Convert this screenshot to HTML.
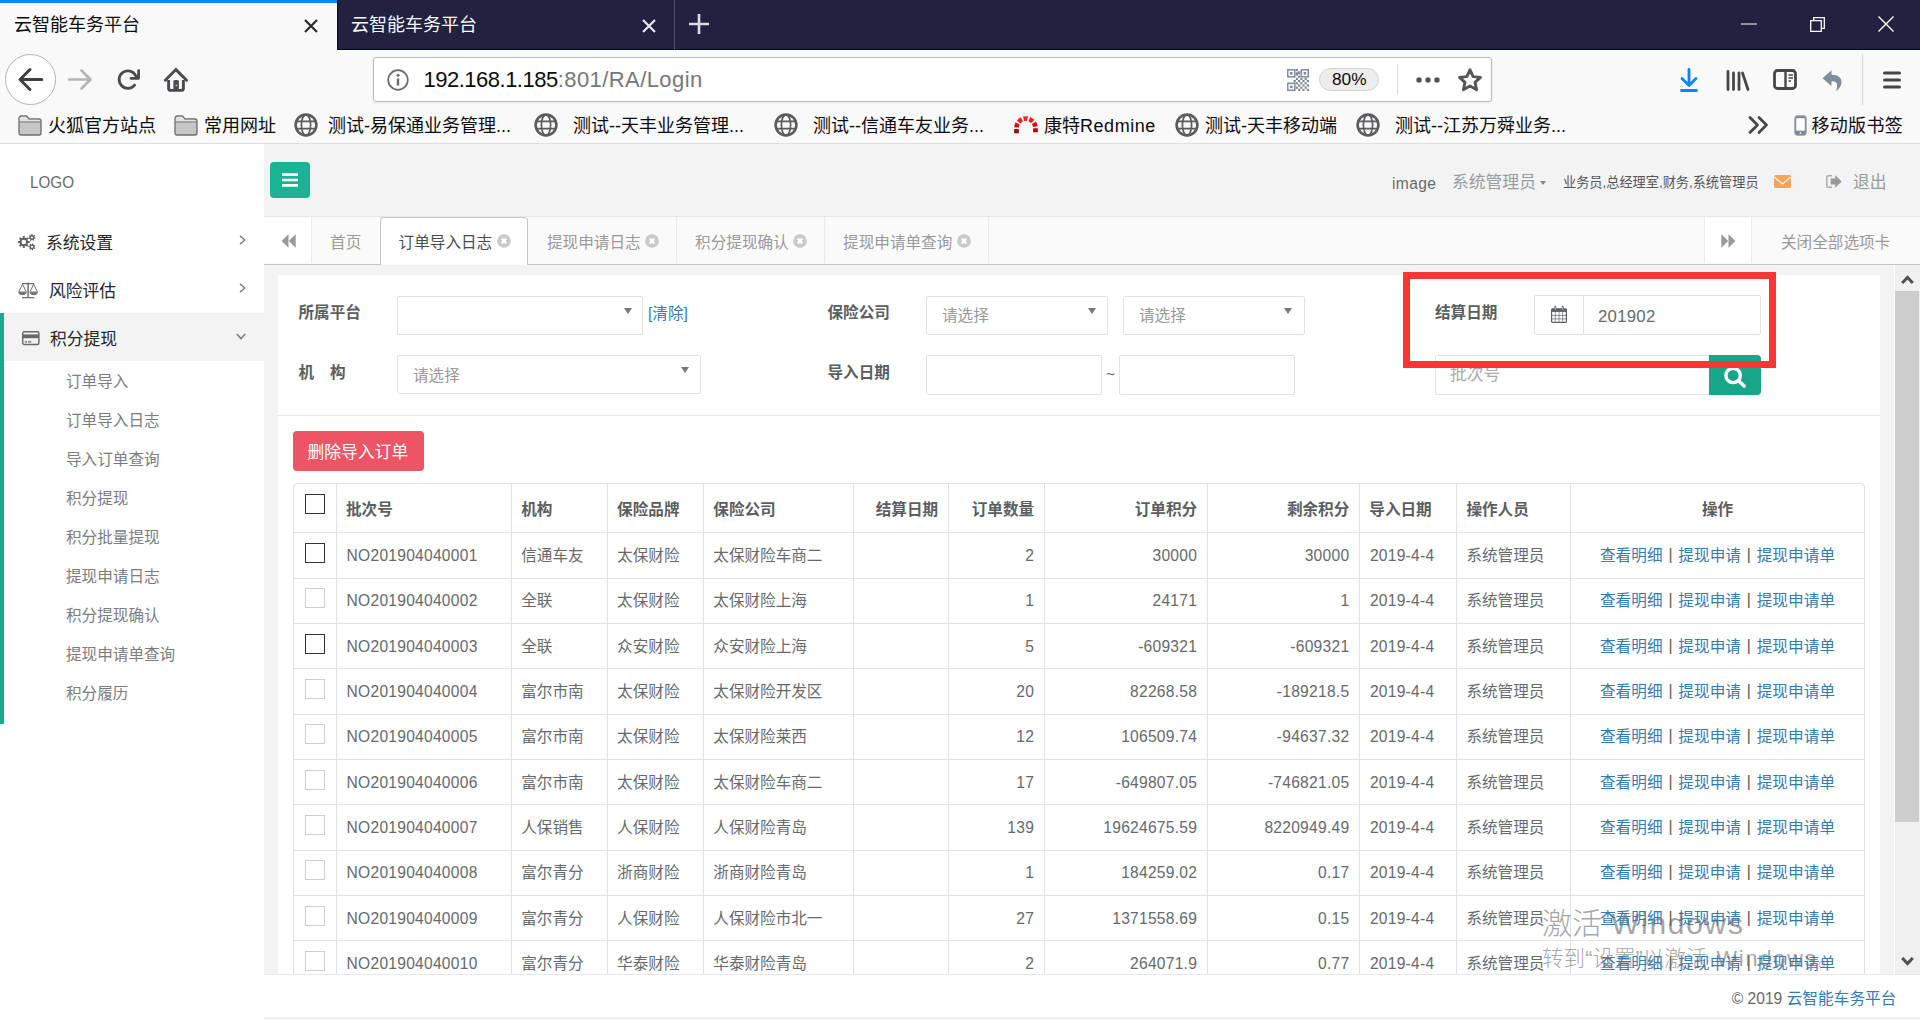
<!DOCTYPE html>
<html lang="zh-CN"><head><meta charset="utf-8"><title>云智能车务平台</title>
<style>
*{box-sizing:border-box;margin:0;padding:0}
html,body{width:1920px;height:1020px;overflow:hidden;background:#fff}
body{font-family:"Liberation Sans","Noto Sans CJK SC",sans-serif;color:#676a6c;font-size:15.6px;position:relative}
.abs{position:absolute}
.t{position:absolute;white-space:nowrap;line-height:1}
svg{position:absolute;overflow:visible}
/* ---------- browser chrome ---------- */
#tabbar{left:0;top:0;width:1920px;height:50px;background:#20223f}
#tab1{left:0;top:0;width:337px;height:50px;background:#f9f9fa}
#tab1line{left:0;top:0;width:337px;height:3px;background:#0a84ff}
#toolbar{left:0;top:50px;width:1920px;height:93px;background:#f9f9fa}
#chromeline{left:0;top:143px;width:1920px;height:1px;background:#e0e0e1}
.ct{font-size:18px;color:#0c0c0d}
#urlbar{left:373px;top:57px;width:1119px;height:45px;background:#fff;border:1px solid #b9b9bb;border-radius:3px;box-shadow:0 1px 3px rgba(0,0,0,.08)}
.bm{font-size:18px;color:#0c0c0d;top:116.8px}
/* ---------- page ---------- */
#side{left:0;top:144px;width:264px;height:876px;background:#fff}
#main{left:264px;top:144px;width:1656px;height:876px;background:#f3f3f4}
.nav1{font-size:16.8px;color:#262626}
.sub{font-size:15.6px;color:#7b7d7f;left:66px}
.lbl{font-weight:bold;font-size:15.6px;color:#5b5e60}
.box{position:absolute;background:#fff;border:1px solid #e1e2e3;border-radius:2px}
.ph{font-size:15.6px;color:#999}
.tri{position:absolute;width:0;height:0;border-left:4.3px solid transparent;border-right:4.3px solid transparent;border-top:6.8px solid #777}
.ptab{position:absolute;top:217px;height:47px;border-right:1px solid #ebebeb;font-size:15.6px;color:#999;white-space:nowrap}
.vl{position:absolute;width:1px;background:#e3e3e3}
.hl{position:absolute;height:1px;background:#e3e3e3}
.cell{position:absolute;white-space:nowrap;line-height:1;font-size:15.6px;color:#676a6c}
.th{font-weight:bold;color:#5b5e60}
.n{letter-spacing:.25px}
.lk{color:#337ab7;letter-spacing:.1px}
.cb{position:absolute;width:20px;height:20px;left:305px;background:#fff;border:1.5px solid #333}
.cb.l{border:1px solid #cfcfcf}
</style></head>
<body>
<div class="abs" id="tabbar"></div>
<div class="abs" style="left:337px;top:49px;width:1583px;height:1px;background:#07071c"></div><div class="abs" style="left:337px;top:3px;width:1px;height:47px;background:#0c0d22"></div>
<div class="abs" id="tab1"></div><div class="abs" id="tab1line"></div>
<div class="t ct" style="left:14px;top:16px">云智能车务平台</div>
<svg style="left:304px;top:19px" width="14" height="14" viewBox="0 0 14 14"><path d="M1 1L13 13M13 1L1 13" stroke="#2a2a2e" stroke-width="2.2" fill="none"/></svg>
<div class="t ct" style="left:351px;top:16px;color:#f9f9fa">云智能车务平台</div>
<svg style="left:642px;top:19px" width="14" height="14" viewBox="0 0 14 14"><path d="M1 1L13 13M13 1L1 13" stroke="#e8e8ee" stroke-width="2.2" fill="none"/></svg>
<div class="abs" style="left:674px;top:0;width:1px;height:50px;background:#4a4c63"></div>
<svg style="left:689px;top:14px" width="20" height="20" viewBox="0 0 20 20"><path d="M10 0V20M0 10H20" stroke="#dcdce2" stroke-width="2.6" fill="none"/></svg>
<svg style="left:1741px;top:23px" width="16" height="2" viewBox="0 0 16 2"><path d="M0 1H16" stroke="#fff" stroke-width="1"/></svg>
<svg style="left:1810px;top:17px" width="15" height="15" viewBox="0 0 15 15"><path d="M0.7 3.7H11.3V14.3H0.7Z M3.7 3.7V0.7H14.3V11.3H11.3" stroke="#fff" stroke-width="1.3" fill="none"/></svg>
<svg style="left:1878px;top:16px" width="16" height="16" viewBox="0 0 16 16"><path d="M0.5 0.5L15.5 15.5M15.5 0.5L0.5 15.5" stroke="#fff" stroke-width="1.4" fill="none"/></svg>
<div class="abs" id="toolbar"></div><div class="abs" id="chromeline"></div>
<div class="abs" style="left:337px;top:50px;width:1583px;height:1px;background:#fff"></div>
<div class="abs" style="left:5px;top:54px;width:51px;height:51px;border-radius:50%;background:#fff;border:1px solid #b4b4b6"></div>
<svg style="left:18px;top:68px" width="26" height="23" viewBox="0 0 26 23"><path d="M23.8 11.5H3M12 1.5L2 11.5L12 21.5" stroke="#3f3f41" stroke-width="3" fill="none" stroke-linecap="round" stroke-linejoin="round"/></svg>
<svg style="left:68px;top:69px" width="24" height="21" viewBox="0 0 24 21"><path d="M1 10.5H22M13.5 1.5L22.5 10.5L13.5 19.5" stroke="#b5b5b6" stroke-width="2.6" fill="none" stroke-linecap="round" stroke-linejoin="round"/></svg>
<svg style="left:0;top:0" width="240" height="110" viewBox="0 0 240 110"><path d="M135.6 75.6A8.7 8.7 0 1 0 134.6 85.1" stroke="#4a4a4f" stroke-width="2.8" fill="none" stroke-linecap="round"/><path d="M138.6 70.6V78.3H130.9" fill="none" stroke="#4a4a4f" stroke-width="2.7" stroke-linejoin="round" stroke-linecap="round"/><path d="M138.6 73.5V78.3H133.5Z" fill="#4a4a4f"/><path d="M165.3 80.3L175.9 69.6L186.6 80.3" stroke="#4a4a4f" stroke-width="2.9" fill="none" stroke-linecap="round" stroke-linejoin="miter"/><path d="M168.6 80V88.2Q168.6 90.4 170.8 90.4H181.2Q183.4 90.4 183.4 88.2V80" stroke="#4a4a4f" stroke-width="2.9" fill="none"/><path d="M173.4 91V81.6Q173.4 80 175 80H177.300Q178.9 80 178.9 81.6V91Z" fill="#4a4a4f"/><circle cx="176.4" cy="85.3" r="0.9" fill="#c9c9cc"/></svg>
<div class="abs" id="urlbar"></div>
<svg style="left:387px;top:69px" width="22" height="22" viewBox="0 0 22 22"><circle cx="11" cy="11" r="9.8" stroke="#6a6a6c" stroke-width="1.7" fill="none"/><rect x="9.8" y="9.5" width="2.4" height="7" fill="#6a6a6c"/><circle cx="11" cy="6.3" r="1.5" fill="#6a6a6c"/></svg>
<div class="t" id="url" style="left:423.5px;top:69.3px;font-size:22px;color:#0c0c0d;letter-spacing:-0.5px">192.168.1.185<span style="color:#77777a;letter-spacing:.42px">:801/RA/Login</span></div>
<svg style="left:1287px;top:69px" width="22" height="22" viewBox="0 0 22 22" fill="#7f8b99"><rect x="0.8" y="0.8" width="7" height="7" fill="none" stroke="#7f8b99" stroke-width="1.5"/><rect x="3.0" y="3.0" width="2.6" height="2.6"/><rect x="14.3" y="0.8" width="7" height="7" fill="none" stroke="#7f8b99" stroke-width="1.5"/><rect x="16.6" y="3.0" width="2.6" height="2.6"/><rect x="0.8" y="14.3" width="7" height="7" fill="none" stroke="#7f8b99" stroke-width="1.5"/><rect x="3.0" y="16.6" width="2.6" height="2.6"/><rect x="9" y="3.3" width="4" height="2"/><rect x="8.8" y="0.0" width="2.2" height="2.2"/><rect x="11.0" y="2.2" width="2.2" height="2.2"/><rect x="8.8" y="4.4" width="2.2" height="2.2"/><rect x="11.0" y="6.6" width="2.2" height="2.2"/><rect x="8.8" y="8.8" width="2.2" height="2.2"/><rect x="13.2" y="8.8" width="2.2" height="2.2"/><rect x="17.6" y="8.8" width="2.2" height="2.2"/><rect x="6.6" y="11.0" width="2.2" height="2.2"/><rect x="11.0" y="11.0" width="2.2" height="2.2"/><rect x="15.4" y="11.0" width="2.2" height="2.2"/><rect x="19.8" y="11.0" width="2.2" height="2.2"/><rect x="8.8" y="13.2" width="2.2" height="2.2"/><rect x="13.2" y="13.2" width="2.2" height="2.2"/><rect x="17.6" y="13.2" width="2.2" height="2.2"/><rect x="11.0" y="15.4" width="2.2" height="2.2"/><rect x="15.4" y="15.4" width="2.2" height="2.2"/><rect x="19.8" y="15.4" width="2.2" height="2.2"/><rect x="8.8" y="17.6" width="2.2" height="2.2"/><rect x="13.2" y="17.6" width="2.2" height="2.2"/><rect x="17.6" y="17.6" width="2.2" height="2.2"/><rect x="11.0" y="19.8" width="2.2" height="2.2"/><rect x="15.4" y="19.8" width="2.2" height="2.2"/><rect x="19.8" y="19.8" width="2.2" height="2.2"/></svg>
<div class="abs" style="left:1319px;top:68px;width:60px;height:23px;border-radius:12px;background:#ededf0;border:1px solid #d2d2d5"></div>
<div class="t" style="left:1332px;top:71px;font-size:17.3px;color:#0c0c0d">80%</div>
<div class="abs" style="left:1397px;top:64px;width:1px;height:31px;background:#dedee0"></div>
<svg style="left:1416px;top:77px" width="24" height="6" viewBox="0 0 24 6" fill="#555558"><circle cx="3" cy="3" r="2.7"/><circle cx="12" cy="3" r="2.7"/><circle cx="21" cy="3" r="2.7"/></svg>
<svg style="left:1458px;top:68px" width="24" height="24" viewBox="0 0 24 24"><path d="M12 1.8L15.1 8.6L22.5 9.4L17 14.4L18.6 21.7L12 18L5.4 21.7L7 14.4L1.5 9.4L8.9 8.6Z" stroke="#555558" stroke-width="2.9" fill="none" stroke-linejoin="round"/></svg>
<svg style="left:1680px;top:68px" width="18" height="24" viewBox="0 0 18 24"><path d="M9 1.5V17M2 10.5L9 17.5L16 10.5M1.5 22.5H16.5" stroke="#0a84ff" stroke-width="2.8" fill="none" stroke-linecap="round" stroke-linejoin="round"/></svg>
<svg style="left:1726px;top:70px" width="24" height="21" viewBox="0 0 24 21"><path d="M2 1.5V19.5M7.5 3V19.5M13 3V19.5M16.5 3L22 19.5" stroke="#47474a" stroke-width="2.8" fill="none" stroke-linecap="round"/></svg>
<svg style="left:1773px;top:69px" width="24" height="21" viewBox="0 0 24 21"><rect x="1.5" y="1.5" width="21" height="18" rx="3" stroke="#47474a" stroke-width="2.8" fill="none"/><path d="M12.5 2V19" stroke="#47474a" stroke-width="2.4"/><path d="M15.5 6H20M15.5 9H20M15.5 12H18" stroke="#47474a" stroke-width="1.4"/></svg>
<svg style="left:1822px;top:70px" width="22" height="22" viewBox="0 0 22 22"><path d="M9.500 0.300L0.500 8.200L9.500 16.100V11.300C14.600 11.300 16.400 13.400 14.200 21.200C21.400 16.400 22.600 4.800 9.500 4.800Z" fill="#7e8da0"/></svg>
<div class="abs" style="left:1862px;top:54px;width:1px;height:51px;background:#d7d7db"></div>
<svg style="left:1883px;top:71px" width="18" height="18" viewBox="0 0 18 18"><path d="M1.5 2H16.5M1.5 9H16.5M1.5 16H16.5" stroke="#47474a" stroke-width="3" stroke-linecap="round"/></svg>
<svg style="left:18px;top:115px" width="24" height="21" viewBox="0 0 24 21"><path d="M1 3.5Q1 1 3.5 1H8.5L11 4H21Q23 4 23 6V18Q23 20 21 20H3Q1 20 1 18Z" fill="#c6c6c8" stroke="#6c6c6e" stroke-width="1.3"/><path d="M1.8 6.600V3.500Q1.8 1.8 3.500 1.8H8.200L10.600 4.800H21Q22.200 4.800 22.200 6.600Z" fill="#e2e2e3"/><path d="M1 7H23" stroke="#7d7d7f" stroke-width="1"/></svg>
<div class="t bm" style="left:48px">火狐官方站点</div>
<svg style="left:174px;top:115px" width="24" height="21" viewBox="0 0 24 21"><path d="M1 3.5Q1 1 3.5 1H8.5L11 4H21Q23 4 23 6V18Q23 20 21 20H3Q1 20 1 18Z" fill="#c6c6c8" stroke="#6c6c6e" stroke-width="1.3"/><path d="M1.8 6.600V3.500Q1.8 1.8 3.500 1.8H8.200L10.600 4.800H21Q22.200 4.800 22.200 6.600Z" fill="#e2e2e3"/><path d="M1 7H23" stroke="#7d7d7f" stroke-width="1"/></svg>
<div class="t bm" style="left:204px">常用网址</div>
<svg style="left:294.0px;top:113px" width="24" height="24" viewBox="0 0 24 24" fill="none" stroke="#5c5c5f"><circle cx="12" cy="12" r="10.4" stroke-width="2.6"/><ellipse cx="12" cy="12" rx="4.6" ry="10.4" stroke-width="1.7"/><path d="M2.5 8.3H21.5M2.5 15.7H21.5" stroke-width="1.7"/></svg>
<div class="t bm" style="left:328px">测试-易保通业务管理...</div>
<svg style="left:534.0px;top:113px" width="24" height="24" viewBox="0 0 24 24" fill="none" stroke="#5c5c5f"><circle cx="12" cy="12" r="10.4" stroke-width="2.6"/><ellipse cx="12" cy="12" rx="4.6" ry="10.4" stroke-width="1.7"/><path d="M2.5 8.3H21.5M2.5 15.7H21.5" stroke-width="1.7"/></svg>
<div class="t bm" style="left:573px">测试--天丰业务管理...</div>
<svg style="left:774.0px;top:113px" width="24" height="24" viewBox="0 0 24 24" fill="none" stroke="#5c5c5f"><circle cx="12" cy="12" r="10.4" stroke-width="2.6"/><ellipse cx="12" cy="12" rx="4.6" ry="10.4" stroke-width="1.7"/><path d="M2.5 8.3H21.5M2.5 15.7H21.5" stroke-width="1.7"/></svg>
<div class="t bm" style="left:813px">测试--信通车友业务...</div>
<svg style="left:1014px;top:115.500px" width="24" height="17.500" viewBox="0 0 24 17.5" fill="none"><defs><linearGradient id="rg" x1="0" y1="0" x2="0" y2="1"><stop offset="0" stop-color="#ec2530"/><stop offset="0.45" stop-color="#e00606"/><stop offset="1" stop-color="#9a0000"/></linearGradient></defs><path d="M2.500 17.200V12A9.500 9.500 0 0 1 21.500 12V17.200" stroke="url(#rg)" stroke-width="4.700" stroke-dasharray="4.100 1.750"/></svg>
<div class="t bm" style="left:1044px">康特<span style="letter-spacing:.55px">Redmine</span></div>
<svg style="left:1175.0px;top:113px" width="24" height="24" viewBox="0 0 24 24" fill="none" stroke="#5c5c5f"><circle cx="12" cy="12" r="10.4" stroke-width="2.6"/><ellipse cx="12" cy="12" rx="4.6" ry="10.4" stroke-width="1.7"/><path d="M2.5 8.3H21.5M2.5 15.7H21.5" stroke-width="1.7"/></svg>
<div class="t bm" style="left:1205px">测试-天丰移动端</div>
<svg style="left:1356.0px;top:113px" width="24" height="24" viewBox="0 0 24 24" fill="none" stroke="#5c5c5f"><circle cx="12" cy="12" r="10.4" stroke-width="2.6"/><ellipse cx="12" cy="12" rx="4.6" ry="10.4" stroke-width="1.7"/><path d="M2.5 8.3H21.5M2.5 15.7H21.5" stroke-width="1.7"/></svg>
<div class="t bm" style="left:1395px">测试--江苏万舜业务...</div>
<svg style="left:1748px;top:116px" width="21" height="18" viewBox="0 0 21 18"><path d="M2 1.5L9.500 9L2 16.5M11 1.5L18.500 9L11 16.5" stroke="#47474a" stroke-width="2.8" fill="none" stroke-linecap="round" stroke-linejoin="round"/></svg>
<svg style="left:1794px;top:115px" width="13" height="21" viewBox="0 0 13 21"><rect x="0.8" y="0.8" width="11.4" height="19.4" rx="2.2" fill="#7d8794" stroke="#99a1ab" stroke-width="1"/><rect x="2.2" y="3.2" width="8.6" height="12.5" fill="#fdfdfd"/><circle cx="6.5" cy="18" r="1" fill="#e8e8e8"/></svg>
<div class="t bm" style="left:1811.5px;letter-spacing:.3px">移动版书签</div>
<div class="abs" id="side"></div><div class="abs" id="main"></div>
<div class="t" style="left:29.5px;top:174px;font-size:17.4px;color:#676a6c;transform:scaleX(.875);transform-origin:0 0">LOGO</div>
<div class="abs" style="left:0;top:313px;width:264px;height:48px;background:#f3f3f4"></div>
<div class="abs" style="left:0;top:313px;width:4px;height:411px;background:#19aa8d"></div>
<div class="t nav1" style="left:46px;top:235.8px">系统设置</div>
<div class="t nav1" style="left:49px;top:283.9px">风险评估</div>
<div class="t nav1" style="left:50px;top:332px">积分提现</div>
<svg style="left:18px;top:234px" width="18" height="17" viewBox="0 0 18 17"><path d="M9.98 7.00L11.73 7.06L11.73 8.94L9.98 9.00L9.47 10.25L10.65 11.53L9.33 12.85L8.05 11.67L6.80 12.18L6.74 13.93L4.86 13.93L4.80 12.18L3.55 11.67L2.27 12.85L0.95 11.53L2.13 10.25L1.62 9.00L-0.13 8.94L-0.13 7.06L1.62 7.00L2.13 5.75L0.95 4.47L2.27 3.15L3.55 4.33L4.80 3.82L4.86 2.07L6.74 2.07L6.80 3.82L8.05 4.33L9.33 3.15L10.65 4.47L9.47 5.75Z M3.50 8.00A2.30 2.30 0 1 0 8.10 8.00A2.30 2.30 0 1 0 3.50 8.00Z M16.49 3.33L17.50 3.57L17.25 4.80L16.23 4.63L15.69 5.34L16.13 6.28L15.01 6.85L14.51 5.95L13.61 5.97L13.15 6.90L12.01 6.38L12.40 5.42L11.83 4.74L10.82 4.95L10.51 3.74L11.50 3.45L11.68 2.57L10.88 1.92L11.63 0.92L12.48 1.51L13.28 1.11L13.29 0.07L14.54 0.04L14.61 1.07L15.42 1.44L16.24 0.81L17.04 1.77L16.27 2.46Z M12.90 3.50A1.10 1.10 0 1 0 15.10 3.50A1.10 1.10 0 1 0 12.90 3.50Z M16.43 13.37L17.32 13.90L16.72 15.00L15.80 14.54L15.07 15.06L15.21 16.08L13.98 16.30L13.76 15.29L12.90 15.05L12.19 15.79L11.25 14.96L11.90 14.16L11.56 13.34L10.53 13.25L10.59 12.00L11.63 12.01L12.06 11.23L11.49 10.37L12.50 9.64L13.14 10.45L14.02 10.30L14.34 9.32L15.54 9.66L15.30 10.66L15.96 11.25L16.93 10.89L17.42 12.04L16.48 12.48Z M12.90 12.80A1.10 1.10 0 1 0 15.10 12.80A1.10 1.10 0 1 0 12.90 12.80Z" fill="#5f6163" fill-rule="evenodd"/></svg>
<svg style="left:17.8px;top:282px" width="20" height="16.5" viewBox="0 0 20 16.5" fill="none" stroke="#6d6f71"><path d="M10.1 0.6V15.4" stroke-width="1.5"/><path d="M4 1.7H16.2M4 15.6H16.2" stroke-width="1.2"/><path d="M4.5 2.2L0.7 10H8.3Z M15.7 2.2L11.9 10H19.5Z" stroke-width="1"/><path d="M0.2 10.2H8.8Q8 13 4.5 13Q1 13 0.2 10.2Z M11.4 10.2H20Q19.2 13 15.7 13Q12.2 13 11.4 10.2Z" fill="#6d6f71" stroke="none"/></svg>
<svg style="left:21.8px;top:331px" width="17.6" height="14.2" viewBox="0 0 17.6 14.2" fill="none"><rect x="0.7" y="0.7" width="16.2" height="12.8" rx="1.5" stroke="#666869" stroke-width="1.4"/><rect x="0.7" y="3.4" width="16.2" height="3.8" fill="#666869"/><path d="M2.8 10.9H5M6 10.9H9.2" stroke="#666869" stroke-width="1.1"/></svg>
<svg style="left:239px;top:235px" width="7" height="10" viewBox="0 0 7 10"><path d="M1 0.8L5.600 5L1 9.200" stroke="#7a7c7e" stroke-width="1.5" fill="none"/></svg>
<svg style="left:239px;top:283px" width="7" height="10" viewBox="0 0 7 10"><path d="M1 0.8L5.600 5L1 9.200" stroke="#7a7c7e" stroke-width="1.5" fill="none"/></svg>
<svg style="left:236px;top:333px" width="10" height="7" viewBox="0 0 10 7"><path d="M0.8 1L5 5.600L9.200 1" stroke="#7a7c7e" stroke-width="1.5" fill="none"/></svg>
<div class="t sub" style="top:374.2px">订单导入</div>
<div class="t sub" style="top:413.2px">订单导入日志</div>
<div class="t sub" style="top:452.2px">导入订单查询</div>
<div class="t sub" style="top:491.2px">积分提现</div>
<div class="t sub" style="top:530.2px">积分批量提现</div>
<div class="t sub" style="top:569.2px">提现申请日志</div>
<div class="t sub" style="top:608.2px">积分提现确认</div>
<div class="t sub" style="top:647.2px">提现申请单查询</div>
<div class="t sub" style="top:686.2px">积分履历</div>
<div class="abs" style="left:270px;top:162px;width:40px;height:36px;border-radius:4px;background:#1ab394"></div>
<svg style="left:282px;top:173px" width="16" height="14" viewBox="0 0 16 14"><path d="M0 1.600H16M0 7H16M0 12.400H16" stroke="#fff" stroke-width="2.6"/></svg>
<div class="t" style="left:1392px;top:175.5px;font-size:15.6px;color:#676a6c;letter-spacing:.35px">image</div>
<div class="t" style="left:1452px;top:174.8px;font-size:16.8px;color:#999c9e">系统管理员</div>
<div class="abs" style="left:1539.5px;top:180.6px;width:0;height:0;border-left:3.9px solid transparent;border-right:3.9px solid transparent;border-top:4.8px solid #848688"></div>
<div class="t" style="left:1563px;top:176.2px;font-size:13.2px;color:#555">业务员,总经理室,财务,系统管理员</div>
<svg style="left:1774px;top:175px" width="17" height="13" viewBox="0 0 17 13"><rect width="17" height="13" rx="1.600" fill="#f5a55a"/><path d="M0.200 1.900L8.500 9L16.800 1.900" stroke="#f3f3f4" stroke-width="1.3" fill="none"/></svg>
<svg style="left:1826px;top:175px" width="16" height="13" viewBox="0 0 16 13"><path d="M6 0.800H2.500Q0.800 0.800 0.800 2.500V10.500Q0.800 12.200 2.500 12.200H6" stroke="#a9abad" stroke-width="1.5" fill="none"/><path d="M4.600 3.600H9.200V0.300L15.700 6.500L9.200 12.700V9.400H4.600Z" fill="#97999b"/></svg>
<div class="t" style="left:1853px;top:174.8px;font-size:16.8px;color:#999c9e">退出</div>
<div class="abs" style="left:264px;top:216px;width:1656px;height:1px;background:#e4e6e8"></div>
<div class="abs" style="left:264px;top:217px;width:1656px;height:47px;background:#fafafa"></div>
<div class="abs" style="left:264px;top:264px;width:1656px;height:1px;background:#c6c6c6"></div>
<div class="abs" style="left:264px;top:217px;width:48px;height:46px;background:#fff;border-right:1px solid #ebebeb"></div>
<svg style="left:281px;top:234px" width="15" height="14" viewBox="0 0 15 14" fill="#999"><path d="M7.500 0.300V13.700L0.600 7Z M14.700 0.300V13.700L7.800 7Z"/></svg>
<div class="abs" style="left:379.5px;top:217px;width:1px;height:46px;background:#ebebeb"></div>
<div class="t" style="left:330.1px;top:234.9px;font-size:15.6px;color:#999">首页</div>
<div class="abs" style="left:380.0px;top:217px;width:148.4px;height:48px;background:#fff;border:1px solid #c8c8c8;border-bottom:none;border-radius:4px 4px 0 0"></div>
<div class="t" style="left:398.6px;top:234.9px;font-size:15.6px;color:#4a4c4e">订单导入日志</div>
<svg style="left:496.7px;top:234.400px" width="14" height="14" viewBox="0 0 14 14"><circle cx="7" cy="7" r="6.800" fill="#c9c9c9"/><path d="M4.600 4.600L9.400 9.400M9.400 4.600L4.600 9.400" stroke="#fff" stroke-width="2.2"/></svg>
<div class="abs" style="left:676.0px;top:217px;width:1px;height:46px;background:#ebebeb"></div>
<div class="t" style="left:547.0px;top:234.9px;font-size:15.6px;color:#999">提现申请日志</div>
<svg style="left:645.1px;top:234.400px" width="14" height="14" viewBox="0 0 14 14"><circle cx="7" cy="7" r="6.800" fill="#c9c9c9"/><path d="M4.600 4.600L9.400 9.400M9.400 4.600L4.600 9.400" stroke="#fff" stroke-width="2.2"/></svg>
<div class="abs" style="left:824.0px;top:217px;width:1px;height:46px;background:#ebebeb"></div>
<div class="t" style="left:695.1px;top:234.9px;font-size:15.6px;color:#999">积分提现确认</div>
<svg style="left:793.2px;top:234.400px" width="14" height="14" viewBox="0 0 14 14"><circle cx="7" cy="7" r="6.800" fill="#c9c9c9"/><path d="M4.600 4.600L9.400 9.400M9.400 4.600L4.600 9.400" stroke="#fff" stroke-width="2.2"/></svg>
<div class="abs" style="left:987.9px;top:217px;width:1px;height:46px;background:#ebebeb"></div>
<div class="t" style="left:843.1px;top:234.9px;font-size:15.6px;color:#999">提现申请单查询</div>
<svg style="left:956.8px;top:234.400px" width="14" height="14" viewBox="0 0 14 14"><circle cx="7" cy="7" r="6.800" fill="#c9c9c9"/><path d="M4.600 4.600L9.400 9.400M9.400 4.600L4.600 9.400" stroke="#fff" stroke-width="2.2"/></svg>
<div class="abs" style="left:1704px;top:217px;width:48px;height:46px;background:#fff;border-left:1px solid #ebebeb;border-right:1px solid #ebebeb"></div>
<svg style="left:1721px;top:234px" width="15" height="14" viewBox="0 0 15 14" fill="#999"><path d="M0.300 0.300V13.700L7.200 7Z M7.500 0.300V13.700L14.400 7Z"/></svg>
<div class="t" style="left:1781px;top:234.8px;font-size:15.6px;color:#999">关闭全部选项卡</div>
<div class="abs" style="left:278px;top:275px;width:1602px;height:699px;background:#fff"></div>
<div class="abs" style="left:278px;top:415px;width:1602px;height:1px;background:#e7eaec"></div>
<div class="t lbl" style="left:298.500px;top:305.3px">所属平台</div>
<div class="box" style="left:397px;top:296px;width:246px;height:39px"></div>
<div class="tri" style="left:623.500px;top:307.500px"></div>
<div class="t" style="left:648px;top:306px;font-size:15.6px;color:#337ab7">[清除]</div>
<div class="t lbl" style="left:298.500px;top:365.3px">机<span style="display:inline-block;width:16px"></span>构</div>
<div class="box" style="left:397px;top:355px;width:304px;height:39px"></div>
<div class="t ph" style="left:413px;top:368px">请选择</div>
<div class="tri" style="left:680.500px;top:367px"></div>
<div class="t lbl" style="left:827.500px;top:305.3px">保险公司</div>
<div class="box" style="left:926px;top:296px;width:182px;height:39px"></div>
<div class="t ph" style="left:942px;top:308px">请选择</div>
<div class="tri" style="left:1087.500px;top:307.500px"></div>
<div class="box" style="left:1123px;top:296px;width:182px;height:39px"></div>
<div class="t ph" style="left:1139px;top:308px">请选择</div>
<div class="tri" style="left:1284px;top:307.500px"></div>
<div class="t lbl" style="left:827.500px;top:365.3px">导入日期</div>
<div class="box" style="left:926px;top:355px;width:176px;height:40px"></div>
<div class="t" style="left:1106px;top:367px;font-size:15.6px;color:#676a6c">~</div>
<div class="box" style="left:1119px;top:355px;width:176px;height:40px"></div>
<div class="t lbl" style="left:1435px;top:305.4px">结算日期</div>
<div class="box" style="left:1534px;top:295px;width:227px;height:40px"></div>
<div class="abs" style="left:1583px;top:296px;width:1px;height:38px;background:#e1e2e3"></div>
<svg style="left:1551px;top:305.600px" width="16" height="17" viewBox="0 0 16 17" fill="none"><rect x="0.600" y="2.900" width="14.800" height="13.500" rx="1" stroke="#5d6062" stroke-width="1.2"/><rect x="0.600" y="2.900" width="14.800" height="3" fill="#5d6062"/><path d="M4.300 0.700V4M11.700 0.700V4" stroke="#5d6062" stroke-width="2" stroke-linecap="round"/><path d="M4.300 1.200V3.400M11.700 1.200V3.400" stroke="#e9e9e9" stroke-width="0.700" stroke-linecap="round"/><path d="M4.300 6V16M8 6V16M11.700 6V16M1 9.500H15M1 12.900H15" stroke="#6f7274" stroke-width="0.750"/></svg>
<div class="t" style="left:1598px;top:308.6px;font-size:16.8px;color:#676a6c;letter-spacing:.25px">201902</div>
<div class="box" style="left:1435px;top:355px;width:275px;height:40px"></div>
<div class="t" style="left:1450px;top:367.2px;font-size:16.8px;color:#ababab">批次号</div>
<div class="abs" style="left:1709px;top:355px;width:52px;height:40px;background:#18a689;border-radius:0 4px 4px 0"></div>
<svg style="left:1724px;top:367px" width="22" height="21" viewBox="0 0 22 21" fill="none"><circle cx="9.1" cy="8.4" r="7.2" stroke="#fff" stroke-width="3.4"/><path d="M14.8 13.9L20.2 19.1" stroke="#fff" stroke-width="3.5" stroke-linecap="round"/></svg>
<div class="abs" style="left:1403px;top:272px;width:373px;height:95.500px;border:7px solid #f83636"></div>
<div class="abs" style="left:293px;top:431px;width:131px;height:40px;border-radius:4px;background:#ed5565"></div>
<div class="t" style="left:307.500px;top:445.2px;font-size:16.8px;color:#fff">删除导入订单</div>
<div class="abs" style="left:293px;top:483px;width:1572px;height:500px;border:1px solid #e0e0e0;border-bottom:none;border-radius:5px 5px 0 0"></div>
<div class="vl" style="left:335.7px;top:484px;height:490px"></div>
<div class="vl" style="left:510.9px;top:484px;height:490px"></div>
<div class="vl" style="left:606.8px;top:484px;height:490px"></div>
<div class="vl" style="left:703.0px;top:484px;height:490px"></div>
<div class="vl" style="left:852.8px;top:484px;height:490px"></div>
<div class="vl" style="left:947.8px;top:484px;height:490px"></div>
<div class="vl" style="left:1043.8px;top:484px;height:490px"></div>
<div class="vl" style="left:1206.8px;top:484px;height:490px"></div>
<div class="vl" style="left:1359.0px;top:484px;height:490px"></div>
<div class="vl" style="left:1456.1px;top:484px;height:490px"></div>
<div class="vl" style="left:1570.0px;top:484px;height:490px"></div>
<div class="hl" style="left:294px;top:532.2px;width:1570px"></div>
<div class="hl" style="left:294px;top:577.5px;width:1570px"></div>
<div class="hl" style="left:294px;top:622.9px;width:1570px"></div>
<div class="hl" style="left:294px;top:668.2px;width:1570px"></div>
<div class="hl" style="left:294px;top:713.5px;width:1570px"></div>
<div class="hl" style="left:294px;top:758.9px;width:1570px"></div>
<div class="hl" style="left:294px;top:804.2px;width:1570px"></div>
<div class="hl" style="left:294px;top:849.5px;width:1570px"></div>
<div class="hl" style="left:294px;top:894.8px;width:1570px"></div>
<div class="hl" style="left:294px;top:940.2px;width:1570px"></div>
<div class="cell th" style="left:346.0px;top:501.7px">批次号</div>
<div class="cell th" style="left:521.2px;top:501.7px">机构</div>
<div class="cell th" style="left:617.1px;top:501.7px">保险品牌</div>
<div class="cell th" style="left:713.3px;top:501.7px">保险公司</div>
<div class="cell th" style="right:981.9px;top:501.7px">结算日期</div>
<div class="cell th" style="right:885.9px;top:501.7px">订单数量</div>
<div class="cell th" style="right:722.9px;top:501.7px">订单积分</div>
<div class="cell th" style="right:570.7px;top:501.7px">剩余积分</div>
<div class="cell th" style="left:1369.3px;top:501.7px">导入日期</div>
<div class="cell th" style="left:1466.4px;top:501.7px">操作人员</div>
<div class="cell th" style="left:1570.5px;width:294.0px;text-align:center;top:501.7px">操作</div>
<div class="cb" style="top:494px"></div>
<div class="cb " style="top:542.9px"></div>
<div class="cell n" style="left:346.6px;top:547.9px">NO201904040001</div>
<div class="cell " style="left:521.2px;top:547.9px">信通车友</div>
<div class="cell " style="left:617.1px;top:547.9px">太保财险</div>
<div class="cell " style="left:713.3px;top:547.9px">太保财险车商二</div>
<div class="cell n" style="right:885.9px;top:547.9px">2</div>
<div class="cell n" style="right:722.9px;top:547.9px">30000</div>
<div class="cell n" style="right:570.7px;top:547.9px">30000</div>
<div class="cell n" style="left:1369.9px;top:547.9px">2019-4-4</div>
<div class="cell " style="left:1466.4px;top:547.9px">系统管理员</div>
<div class="cell " style="left:1570.5px;width:294.0px;text-align:center;top:547.9px"><span class="lk">查看明细</span><span style="display:inline-block;width:15.6px;text-align:center;color:#555;position:relative;top:-1px">|</span><span class="lk">提现申请</span><span style="display:inline-block;width:15.6px;text-align:center;color:#555;position:relative;top:-1px">|</span><span class="lk">提现申请单</span></div>
<div class="cb l" style="top:588.2px"></div>
<div class="cell n" style="left:346.6px;top:593.2px">NO201904040002</div>
<div class="cell " style="left:521.2px;top:593.2px">全联</div>
<div class="cell " style="left:617.1px;top:593.2px">太保财险</div>
<div class="cell " style="left:713.3px;top:593.2px">太保财险上海</div>
<div class="cell n" style="right:885.9px;top:593.2px">1</div>
<div class="cell n" style="right:722.9px;top:593.2px">24171</div>
<div class="cell n" style="right:570.7px;top:593.2px">1</div>
<div class="cell n" style="left:1369.9px;top:593.2px">2019-4-4</div>
<div class="cell " style="left:1466.4px;top:593.2px">系统管理员</div>
<div class="cell " style="left:1570.5px;width:294.0px;text-align:center;top:593.2px"><span class="lk">查看明细</span><span style="display:inline-block;width:15.6px;text-align:center;color:#555;position:relative;top:-1px">|</span><span class="lk">提现申请</span><span style="display:inline-block;width:15.6px;text-align:center;color:#555;position:relative;top:-1px">|</span><span class="lk">提现申请单</span></div>
<div class="cb " style="top:633.6px"></div>
<div class="cell n" style="left:346.6px;top:638.6px">NO201904040003</div>
<div class="cell " style="left:521.2px;top:638.6px">全联</div>
<div class="cell " style="left:617.1px;top:638.6px">众安财险</div>
<div class="cell " style="left:713.3px;top:638.6px">众安财险上海</div>
<div class="cell n" style="right:885.9px;top:638.6px">5</div>
<div class="cell n" style="right:722.9px;top:638.6px">-609321</div>
<div class="cell n" style="right:570.7px;top:638.6px">-609321</div>
<div class="cell n" style="left:1369.9px;top:638.6px">2019-4-4</div>
<div class="cell " style="left:1466.4px;top:638.6px">系统管理员</div>
<div class="cell " style="left:1570.5px;width:294.0px;text-align:center;top:638.6px"><span class="lk">查看明细</span><span style="display:inline-block;width:15.6px;text-align:center;color:#555;position:relative;top:-1px">|</span><span class="lk">提现申请</span><span style="display:inline-block;width:15.6px;text-align:center;color:#555;position:relative;top:-1px">|</span><span class="lk">提现申请单</span></div>
<div class="cb l" style="top:678.9px"></div>
<div class="cell n" style="left:346.6px;top:683.9px">NO201904040004</div>
<div class="cell " style="left:521.2px;top:683.9px">富尔市南</div>
<div class="cell " style="left:617.1px;top:683.9px">太保财险</div>
<div class="cell " style="left:713.3px;top:683.9px">太保财险开发区</div>
<div class="cell n" style="right:885.9px;top:683.9px">20</div>
<div class="cell n" style="right:722.9px;top:683.9px">82268.58</div>
<div class="cell n" style="right:570.7px;top:683.9px">-189218.5</div>
<div class="cell n" style="left:1369.9px;top:683.9px">2019-4-4</div>
<div class="cell " style="left:1466.4px;top:683.9px">系统管理员</div>
<div class="cell " style="left:1570.5px;width:294.0px;text-align:center;top:683.9px"><span class="lk">查看明细</span><span style="display:inline-block;width:15.6px;text-align:center;color:#555;position:relative;top:-1px">|</span><span class="lk">提现申请</span><span style="display:inline-block;width:15.6px;text-align:center;color:#555;position:relative;top:-1px">|</span><span class="lk">提现申请单</span></div>
<div class="cb l" style="top:724.2px"></div>
<div class="cell n" style="left:346.6px;top:729.2px">NO201904040005</div>
<div class="cell " style="left:521.2px;top:729.2px">富尔市南</div>
<div class="cell " style="left:617.1px;top:729.2px">太保财险</div>
<div class="cell " style="left:713.3px;top:729.2px">太保财险莱西</div>
<div class="cell n" style="right:885.9px;top:729.2px">12</div>
<div class="cell n" style="right:722.9px;top:729.2px">106509.74</div>
<div class="cell n" style="right:570.7px;top:729.2px">-94637.32</div>
<div class="cell n" style="left:1369.9px;top:729.2px">2019-4-4</div>
<div class="cell " style="left:1466.4px;top:729.2px">系统管理员</div>
<div class="cell " style="left:1570.5px;width:294.0px;text-align:center;top:729.2px"><span class="lk">查看明细</span><span style="display:inline-block;width:15.6px;text-align:center;color:#555;position:relative;top:-1px">|</span><span class="lk">提现申请</span><span style="display:inline-block;width:15.6px;text-align:center;color:#555;position:relative;top:-1px">|</span><span class="lk">提现申请单</span></div>
<div class="cb l" style="top:769.5px"></div>
<div class="cell n" style="left:346.6px;top:774.5px">NO201904040006</div>
<div class="cell " style="left:521.2px;top:774.5px">富尔市南</div>
<div class="cell " style="left:617.1px;top:774.5px">太保财险</div>
<div class="cell " style="left:713.3px;top:774.5px">太保财险车商二</div>
<div class="cell n" style="right:885.9px;top:774.5px">17</div>
<div class="cell n" style="right:722.9px;top:774.5px">-649807.05</div>
<div class="cell n" style="right:570.7px;top:774.5px">-746821.05</div>
<div class="cell n" style="left:1369.9px;top:774.5px">2019-4-4</div>
<div class="cell " style="left:1466.4px;top:774.5px">系统管理员</div>
<div class="cell " style="left:1570.5px;width:294.0px;text-align:center;top:774.5px"><span class="lk">查看明细</span><span style="display:inline-block;width:15.6px;text-align:center;color:#555;position:relative;top:-1px">|</span><span class="lk">提现申请</span><span style="display:inline-block;width:15.6px;text-align:center;color:#555;position:relative;top:-1px">|</span><span class="lk">提现申请单</span></div>
<div class="cb l" style="top:814.9px"></div>
<div class="cell n" style="left:346.6px;top:819.9px">NO201904040007</div>
<div class="cell " style="left:521.2px;top:819.9px">人保销售</div>
<div class="cell " style="left:617.1px;top:819.9px">人保财险</div>
<div class="cell " style="left:713.3px;top:819.9px">人保财险青岛</div>
<div class="cell n" style="right:885.9px;top:819.9px">139</div>
<div class="cell n" style="right:722.9px;top:819.9px">19624675.59</div>
<div class="cell n" style="right:570.7px;top:819.9px">8220949.49</div>
<div class="cell n" style="left:1369.9px;top:819.9px">2019-4-4</div>
<div class="cell " style="left:1466.4px;top:819.9px">系统管理员</div>
<div class="cell " style="left:1570.5px;width:294.0px;text-align:center;top:819.9px"><span class="lk">查看明细</span><span style="display:inline-block;width:15.6px;text-align:center;color:#555;position:relative;top:-1px">|</span><span class="lk">提现申请</span><span style="display:inline-block;width:15.6px;text-align:center;color:#555;position:relative;top:-1px">|</span><span class="lk">提现申请单</span></div>
<div class="cb l" style="top:860.2px"></div>
<div class="cell n" style="left:346.6px;top:865.2px">NO201904040008</div>
<div class="cell " style="left:521.2px;top:865.2px">富尔青分</div>
<div class="cell " style="left:617.1px;top:865.2px">浙商财险</div>
<div class="cell " style="left:713.3px;top:865.2px">浙商财险青岛</div>
<div class="cell n" style="right:885.9px;top:865.2px">1</div>
<div class="cell n" style="right:722.9px;top:865.2px">184259.02</div>
<div class="cell n" style="right:570.7px;top:865.2px">0.17</div>
<div class="cell n" style="left:1369.9px;top:865.2px">2019-4-4</div>
<div class="cell " style="left:1466.4px;top:865.2px">系统管理员</div>
<div class="cell " style="left:1570.5px;width:294.0px;text-align:center;top:865.2px"><span class="lk">查看明细</span><span style="display:inline-block;width:15.6px;text-align:center;color:#555;position:relative;top:-1px">|</span><span class="lk">提现申请</span><span style="display:inline-block;width:15.6px;text-align:center;color:#555;position:relative;top:-1px">|</span><span class="lk">提现申请单</span></div>
<div class="cb l" style="top:905.5px"></div>
<div class="cell n" style="left:346.6px;top:910.5px">NO201904040009</div>
<div class="cell " style="left:521.2px;top:910.5px">富尔青分</div>
<div class="cell " style="left:617.1px;top:910.5px">人保财险</div>
<div class="cell " style="left:713.3px;top:910.5px">人保财险市北一</div>
<div class="cell n" style="right:885.9px;top:910.5px">27</div>
<div class="cell n" style="right:722.9px;top:910.5px">1371558.69</div>
<div class="cell n" style="right:570.7px;top:910.5px">0.15</div>
<div class="cell n" style="left:1369.9px;top:910.5px">2019-4-4</div>
<div class="cell " style="left:1466.4px;top:910.5px">系统管理员</div>
<div class="cell " style="left:1570.5px;width:294.0px;text-align:center;top:910.5px"><span class="lk">查看明细</span><span style="display:inline-block;width:15.6px;text-align:center;color:#555;position:relative;top:-1px">|</span><span class="lk">提现申请</span><span style="display:inline-block;width:15.6px;text-align:center;color:#555;position:relative;top:-1px">|</span><span class="lk">提现申请单</span></div>
<div class="cb l" style="top:950.9px"></div>
<div class="cell n" style="left:346.6px;top:955.9px">NO201904040010</div>
<div class="cell " style="left:521.2px;top:955.9px">富尔青分</div>
<div class="cell " style="left:617.1px;top:955.9px">华泰财险</div>
<div class="cell " style="left:713.3px;top:955.9px">华泰财险青岛</div>
<div class="cell n" style="right:885.9px;top:955.9px">2</div>
<div class="cell n" style="right:722.9px;top:955.9px">264071.9</div>
<div class="cell n" style="right:570.7px;top:955.9px">0.77</div>
<div class="cell n" style="left:1369.9px;top:955.9px">2019-4-4</div>
<div class="cell " style="left:1466.4px;top:955.9px">系统管理员</div>
<div class="cell " style="left:1570.5px;width:294.0px;text-align:center;top:955.9px"><span class="lk">查看明细</span><span style="display:inline-block;width:15.6px;text-align:center;color:#555;position:relative;top:-1px">|</span><span class="lk">提现申请</span><span style="display:inline-block;width:15.6px;text-align:center;color:#555;position:relative;top:-1px">|</span><span class="lk">提现申请单</span></div>
<div class="abs" style="left:1880px;top:265px;width:15px;height:709px;background:#f3f3f4"></div>
<div class="abs" style="left:1894px;top:265px;width:1px;height:709px;background:#fff"></div><div class="abs" style="left:1895px;top:265px;width:25px;height:709px;background:#f0f0f0"></div>
<div class="abs" style="left:1895px;top:291px;width:24px;height:531px;background:#cdcdcd"></div>
<svg style="left:1901px;top:275px" width="13" height="9" viewBox="0 0 13 9"><path d="M1.200 8L6.500 2.400L11.800 8" stroke="#505050" stroke-width="3" fill="none"/></svg>
<svg style="left:1901px;top:957px" width="13" height="9" viewBox="0 0 13 9"><path d="M1.200 1L6.500 6.600L11.800 1" stroke="#505050" stroke-width="3" fill="none"/></svg>
<div class="abs" style="left:264px;top:974px;width:1656px;height:43px;background:#fff;border-top:1px solid #e7eaec"></div>
<div class="abs" style="left:264px;top:1017px;width:1656px;height:3px;background:#f3f3f4"></div>
<div class="t" style="right:23.5px;top:991.3px;font-size:15.6px;color:#676a6c">© 2019 <span class="lk">云智能车务平台</span></div>
<div class="t" style="left:1542px;top:909px;font-size:30px;font-weight:300;color:rgba(105,105,105,.6)">激活<span style="letter-spacing:1.7px;margin-left:9px">Windows</span></div>
<div class="t" style="left:1542px;top:948px;font-size:21.6px;font-weight:300;color:rgba(105,105,105,.6)">转到“设置”以激活<span style="letter-spacing:1.9px;margin-left:9px">Windows</span>。</div>
</body></html>
